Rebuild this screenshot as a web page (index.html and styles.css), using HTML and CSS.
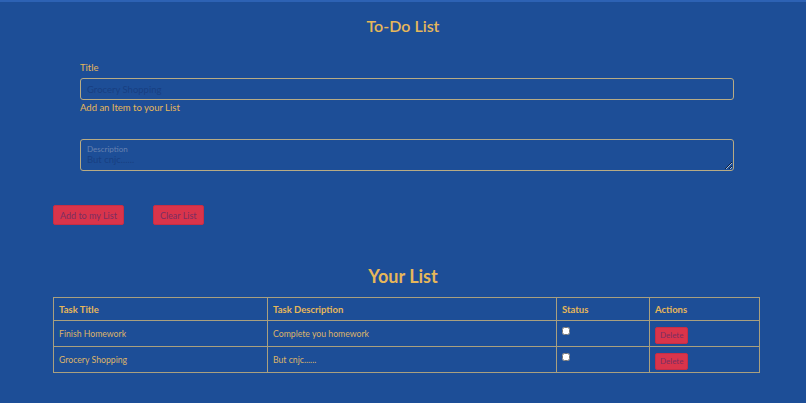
FILE: index.html
```html
<!DOCTYPE html>
<html>
<head>
  <title>To-Do List</title>
  <meta charset="UTF-8">
  <link rel="stylesheet" href="styles.css">
</head>
<body>
  <h1 class="page-title">To-Do List</h1>

  <!-- форма добавления -->
  <div class="form-box">
    <label class="field-label" for="titleInput">Title</label>
    <input type="text" id="titleInput" class="field" placeholder="Grocery Shopping">
    <p class="hint">Add an Item to your List</p>

    <div class="floating">
      <span class="floating-label">Description</span>
      <textarea id="descInput" class="field area">But cnjc......</textarea>
    </div>
  </div>

  <div class="btn-row">
    <button class="btn-red">Add to my List</button>
    <button class="btn-red">Clear List</button>
  </div>

  <h2 class="list-title">Your List</h2>

  <table class="task-table">
    <thead>
      <tr>
        <th class="col-title">Task Title</th>
        <th class="col-desc">Task Description</th>
        <th class="col-status">Status</th>
        <th>Actions</th>
      </tr>
    </thead>
    <tbody>
      <tr>
        <td>Finish Homework</td>
        <td>Complete you homework</td>
        <td><input type="checkbox"></td>
        <td><button class="btn-red btn-small">Delete</button></td>
      </tr>
      <tr>
        <td>Grocery Shopping</td>
        <td>But cnjc......</td>
        <td><input type="checkbox"></td>
        <td><button class="btn-red btn-small">Delete</button></td>
      </tr>
    </tbody>
  </table>
</body>
</html>
```
FILE: styles.css
```css
body {
  margin: 0;
  background: #1d4e97;
  border-top: 2px solid #2d62b4;
  font-family: Lato, "Open Sans", sans-serif;
  color: #e6b75a;
  font-size: 10px;
}
.page-title {
  text-align: center;
  font-size: 16px;
  font-weight: 600;
  margin: 12px 0 0;
  line-height: 24px;
}
.form-box { padding: 23px 72px 0 80px; }
.field-label { display: block; font-size: 9.5px; line-height: 14px; }
.field {
  display: block;
  width: 100%;
  box-sizing: border-box;
  background: transparent;
  border: 1.5px solid #b8ab84;
  border-radius: 3px;
  color: #183f82;
  font-family: inherit;
  font-size: 9.5px;
  padding: 3px 6px;
  margin-top: 3px;
  height: 22px;
}
.field::placeholder { color: #183f82; }
.hint { margin: 1px 0 0; font-size: 9.5px; line-height: 13px; }
.floating { position: relative; margin-top: 25px; }
.floating-label {
  position: absolute;
  left: 7px;
  top: 5px;
  font-size: 8px;
  color: #6781b0;
}
.area {
  height: 32px;
  padding: 14px 6px 0;
  resize: vertical;
  line-height: 12px;
  overflow-y: scroll;
}
.btn-row { display: flex; gap: 29px; padding: 34px 0 0 53px; }
.btn-red {
  background: #d9344b;
  border: 1px solid #c62e45;
  border-radius: 2px;
  color: #7a2f62;
  font-family: inherit;
  font-size: 9px;
  height: 20px;
  padding: 0 6px;
}
.list-title {
  text-align: center;
  font-size: 18px;
  font-weight: 700;
  margin: 39px 0 0;
  line-height: 24px;
}
.task-table {
  border-collapse: collapse;
  margin: 9px 0 0 53px;
  width: 707px;
}
.task-table th, .task-table td {
  border: 1px solid #a9a07f;
  text-align: left;
  padding: 0 5px;
  font-size: 9.5px;
}
.task-table th { height: 22px; font-weight: 700; }
.task-table td { height: 25px; color: #dcb46a; font-size: 8.7px; }
.col-title { width: 203px; }
.col-desc { width: 278px; }
.col-status { width: 82px; }
.task-table input[type="checkbox"] { margin: 0; width: 8px; height: 8px; vertical-align: 3px; }
.btn-small { height: 17px; font-size: 8px; padding: 0 4px; margin-top: 3px; }
```
